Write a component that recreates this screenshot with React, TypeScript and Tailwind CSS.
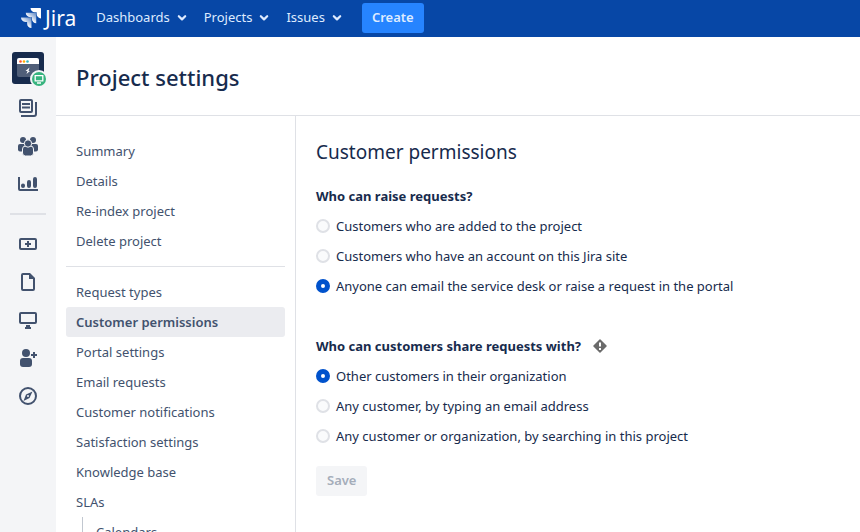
import type { ReactNode } from 'react';

const menus = ['Dashboards', 'Projects', 'Issues'];

const projectLinks = ['Summary', 'Details', 'Re-index project', 'Delete project'];

const settingLinks = [
  'Request types',
  'Customer permissions',
  'Portal settings',
  'Email requests',
  'Customer notifications',
  'Satisfaction settings',
  'Knowledge base',
  'SLAs',
];

const raiseOptions = [
  'Customers who are added to the project',
  'Customers who have an account on this Jira site',
  'Anyone can email the service desk or raise a request in the portal',
];

const shareOptions = [
  'Other customers in their organization',
  'Any customer, by typing an email address',
  'Any customer or organization, by searching in this project',
];

function JiraLogo() {
  return (
    <a href="#" aria-label="Jira" className="flex items-center gap-1 text-[21px] leading-7 text-white">
      <svg width="20" height="20" viewBox="2 2 20 20" aria-hidden="true">
        <defs>
          <linearGradient id="fade" x1="1" y1="0" x2="0.3" y2="0.8">
            <stop offset="0.1" stopColor="#fff" stopOpacity="0.4" />
            <stop offset="0.8" stopColor="#fff" />
          </linearGradient>
        </defs>
        <path fill="#fff" d="M11.53 2c0 2.4 1.97 4.35 4.35 4.35h1.78v1.7c0 2.4 1.94 4.34 4.34 4.35V2.84a.84.84 0 0 0-.84-.84h-9.63z" />
        <path fill="url(#fade)" d="M6.77 6.8a4.362 4.362 0 0 0 4.34 4.34h1.8v1.72a4.362 4.362 0 0 0 4.34 4.34V7.63a.841.841 0 0 0-.83-.83H6.77z" />
        <path fill="url(#fade)" d="M2 11.6c0 2.4 1.95 4.34 4.35 4.34h1.78v1.72c.01 2.39 1.95 4.33 4.34 4.34v-9.57a.84.84 0 0 0-.84-.83H2z" />
      </svg>
      Jira
    </a>
  );
}

function TopBar() {
  return (
    <header className="flex h-[37px] shrink-0 items-center bg-[#0747a6] pb-[2px] pl-[21px]">
      <JiraLogo />
      <nav className="ml-5 flex items-center gap-[17px]">
        {menus.map((menu) => (
          <button key={menu} type="button" className="flex items-center gap-[7px] text-[#deebff]">
            {menu}
            <svg width="10" height="8" viewBox="0 0 10 8" fill="none" stroke="currentColor" strokeWidth="2.200" strokeLinecap="round" strokeLinejoin="round" aria-hidden="true">
              <path d="M1.8 2.2 5 5.4l3.2-3.2" />
            </svg>
          </button>
        ))}
      </nav>
      <button type="button" className="ml-5 h-[30px] rounded-[3px] bg-[#2684ff] px-[10px] font-semibold text-[#deebff]">
        Create
      </button>
    </header>
  );
}

function RailIcon({ label, children }: { label: string; children: ReactNode }) {
  return (
    <a href="#" aria-label={label} className="text-[#42526e]">
      <svg width="24" height="24" viewBox="0 0 24 24" fill="none" stroke="currentColor" strokeWidth="2" aria-hidden="true">
        {children}
      </svg>
    </a>
  );
}

function ProjectAvatar() {
  return (
    <a href="#" aria-label="Project" className="ml-[3px]">
      <svg width="35" height="36" viewBox="0 0 35 36" className="-mb-1" aria-hidden="true">
        <rect width="32" height="32" rx="3" fill="#172b4d" />
        <path fill="#fff" d="M5 12V8a2 2 0 0 1 2-2h18a2 2 0 0 1 2 2v4z" />
        <path fill="#505f79" d="M5 12h22v11a2 2 0 0 1-2 2H7a2 2 0 0 1-2-2z" />
        <circle cx="8.500" cy="9.500" r="1.300" fill="#ff5630" />
        <circle cx="12" cy="9.500" r="1.300" fill="#ffab00" />
        <circle cx="15.500" cy="9.500" r="1.300" fill="#36b5c0" />
        <path fill="#fff" d="m17.500 15.500-4 3.500h2l-1 3 3.500-3h-1.500z" />
        <circle cx="27" cy="27" r="9" fill="#f4f5f7" />
        <circle cx="27" cy="27" r="7" fill="#36b37e" />
        <path fill="none" stroke="#fff" strokeWidth="1.300" d="M23.200 23.700h7.600v5.200h-7.600zM25 31h4" />
      </svg>
    </a>
  );
}

function Rail() {
  return (
    <nav aria-label="Project" className="flex w-14 shrink-0 flex-col items-center gap-[14px] bg-[#f4f5f7] pt-[15px]">
      <div className="flex h-8">
        <ProjectAvatar />
      </div>
      <div className="-mt-[2px] flex flex-col gap-[14px]">
        <RailIcon label="Queues">
          <rect x="4" y="4" width="12" height="12" rx="1" />
          <path d="M6 8h8M6 11.500h8" />
          <path d="M20 6v12a2 2 0 0 1-2 2H5" />
        </RailIcon>
        <RailIcon label="Customers">
          <g fill="currentColor" stroke="none">
            <circle cx="7" cy="6" r="3" />
            <circle cx="17" cy="6" r="3" />
            <rect x="2" y="10" width="8" height="7.500" rx="2" />
            <rect x="14" y="10" width="8" height="7.500" rx="2" />
          </g>
          <g fill="currentColor" stroke="#f4f5f7" strokeWidth="1">
            <rect x="6.500" y="12" width="11" height="10" rx="3" />
            <circle cx="12" cy="9.500" r="3.700" />
          </g>
        </RailIcon>
        <RailIcon label="Reports">
          <path d="M3 5v12a1 1 0 0 0 1 1h18" />
          <path strokeWidth="4" strokeLinecap="round" d="M7 13.500v.5M13 10v4M19 7v7" />
        </RailIcon>
      </div>
      <hr className="my-[3px] h-[2px] w-9 border-0 bg-[#dfe1e6]" />
      <div className="flex flex-col gap-[14px]">
        <RailIcon label="Raise a request">
          <rect x="4" y="7" width="16" height="10" rx="1" />
          <path d="M12 9v6M9 12h6" />
        </RailIcon>
        <RailIcon label="Knowledge base">
          <path strokeLinejoin="round" d="M13 4H7a1 1 0 0 0-1 1v14a1 1 0 0 0 1 1h10a1 1 0 0 0 1-1V9" />
          <path fill="currentColor" stroke="none" d="M13 3h1l5 5v1h-6z" />
        </RailIcon>
        <RailIcon label="Channels">
          <rect x="4" y="5" width="16" height="10" rx="1" />
          <path fill="currentColor" stroke="none" d="M10 17h4v2h1v2H9v-2h1z" />
        </RailIcon>
        <RailIcon label="Invite team">
          <g fill="currentColor" stroke="none">
            <circle cx="10" cy="7" r="4" />
            <rect x="4" y="12" width="12" height="9" rx="3" />
          </g>
          <path d="M18 6v6M15 9h6" />
        </RailIcon>
        <RailIcon label="Explore">
          <circle cx="12" cy="12" r="8" />
          <path fill="currentColor" fillRule="evenodd" stroke="none" d="m16.500 7.500-3 6.500-6 3 2.500-6.500zM12 11a1 1 0 1 0 0 2 1 1 0 0 0 0-2z" />
        </RailIcon>
      </div>
    </nav>
  );
}

function SettingsLink({ label, active = false }: { label: string; active?: boolean }) {
  return (
    <li>
      <a
        href="#"
        aria-current={active ? 'page' : undefined}
        className={
          active
            ? 'block rounded-[3px] bg-[#ebecf0] px-[10px] leading-[30px] font-semibold text-[#42526e]'
            : 'block px-[10px] leading-[30px] text-[#42526e]'
        }
      >
        {label}
      </a>
    </li>
  );
}

function SettingsNav() {
  return (
    <nav aria-label="Settings" className="w-[240px] shrink-0 border-r border-[#dfe1e6] px-[10px] pt-5">
      <ul>
        {projectLinks.map((label) => (
          <SettingsLink key={label} label={label} />
        ))}
      </ul>
      <hr className="my-[10px] border-[#dfe1e6]" />
      <ul>
        {settingLinks.map((label) => (
          <SettingsLink key={label} label={label} active={label === 'Customer permissions'} />
        ))}
      </ul>
      <ul className="ml-4 border-l border-[#c1c7d0] pl-[3px]">
        <SettingsLink label="Calendars" />
      </ul>
    </nav>
  );
}

function RadioGroup({ name, options, selected }: { name: string; options: string[]; selected: number }) {
  return (
    <div>
      {options.map((option, i) => (
        <label key={option} className="flex items-center gap-[6px] leading-[30px]">
          <input
            type="radio"
            name={name}
            defaultChecked={i === selected}
            className="size-[14px] shrink-0 appearance-none rounded-full border-2 border-[#dfe1e6] bg-[#fafbfc] checked:border-5 checked:border-[#0052cc] checked:bg-white"
          />
          {option}
        </label>
      ))}
    </div>
  );
}

export default function App() {
  return (
    <div className="flex h-screen flex-col overflow-hidden bg-white font-['Noto_Sans',sans-serif] text-[13px] text-[#172b4d]">
      <TopBar />
      <div className="flex min-h-0 flex-1">
        <Rail />
        <div className="flex min-w-0 flex-1 flex-col">
          <h1 className="border-b border-[#dfe1e6] px-5 pt-6 pb-[22px] text-[22px] leading-8 font-medium">
            Project settings
          </h1>
          <div className="flex min-h-0 flex-1">
            <SettingsNav />
            <main className="min-w-0 flex-1 px-5 pt-[22px]">
              <h2 className="text-[19px] leading-7">Customer permissions</h2>
              <form className="pt-[15px]">
                <fieldset>
                  <legend className="leading-[30px] font-bold">Who can raise requests?</legend>
                  <RadioGroup name="raise" options={raiseOptions} selected={2} />
                </fieldset>
                <fieldset className="mt-[30px]">
                  <legend className="flex items-center gap-3 leading-[30px] font-bold">
                    Who can customers share requests with?
                    <svg width="14" height="14" viewBox="0 0 14 14" role="img" aria-label="Warning">
                      <path fill="#6b6b6b" stroke="#6b6b6b" strokeLinejoin="round" strokeWidth="1.500" d="M7 1l6 6-6 6-6-6z" />
                      <path stroke="#fff" strokeWidth="2" d="M7 3.500v4M7 9v2" />
                    </svg>
                  </legend>
                  <RadioGroup name="share" options={shareOptions} selected={0} />
                </fieldset>
                <button type="submit" disabled className="mt-[15px] h-[30px] rounded-[3px] bg-[#f4f5f7] px-[11px] font-semibold text-[#a5adba]">
                  Save
                </button>
              </form>
            </main>
          </div>
        </div>
      </div>
    </div>
  );
}
